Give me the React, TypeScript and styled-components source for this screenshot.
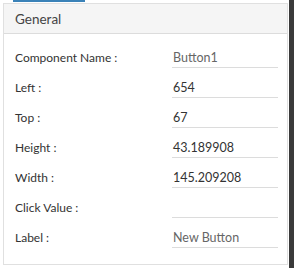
import styled, { createGlobalStyle } from "styled-components";

const GlobalStyle = createGlobalStyle`
  html, body {
    margin: 0;
    padding: 0;
    background: #ffffff;
  }
  body {
    font-family: Lato, "Noto Sans", sans-serif;
  }
`;

const Page = styled.div`
  display: flex;
  width: 294px;
  height: 268px;
  overflow: hidden;
`;

const Main = styled.div`
  position: relative;
  flex: 1;
  padding: 3px 0 0 3px;
`;

const TabIndicator = styled.div`
  position: absolute;
  top: 0;
  left: 13px;
  width: 72px;
  height: 2px;
  background: #3b82b8;
`;

const Scrollbar = styled.div`
  width: 5px;
  background: #3a3a3a;
`;

const Panel = styled.div`
  width: 283px;
  height: 260px;
  border: 1px solid #e0e0e0;
  display: flex;
  flex-direction: column;
`;

const Header = styled.div`
  height: 29px;
  background: #f5f5f5;
  border-bottom: 1px solid #dcdcdc;
  display: flex;
  align-items: center;
  padding-left: 11px;
  font-size: 13.5px;
  color: #444;
`;

const Body = styled.div`
  padding: 8px 0 0 11px;
  display: flex;
  flex-direction: column;
`;

const Row = styled.div`
  height: 30px;
  display: flex;
  align-items: center;
`;

const Label = styled.div`
  width: 157px;
  font-size: 12px;
  color: #333;
`;

const Value = styled.div<{ $muted?: boolean }>`
  width: 105px;
  height: 20px;
  box-sizing: content-box;
  border-bottom: 1px solid #dcdcdc;
  display: flex;
  align-items: center;
  padding-left: 1px;
  font-size: 12.5px;
  color: ${(p) => (p.$muted ? "#666" : "#333")};
  margin-top: 1px;
`;

const fields: { label: string; value: string; muted?: boolean }[] = [
  { label: "Component Name :", value: "Button1", muted: true },
  { label: "Left :", value: "654" },
  { label: "Top :", value: "67" },
  { label: "Height :", value: "43.189908" },
  { label: "Width :", value: "145.209208" },
  { label: "Click Value :", value: "" },
  { label: "Label :", value: "New Button", muted: true },
];

const App = () => {
  return (
    <>
      <GlobalStyle />
      <Page>
        <Main>
          <TabIndicator />
          <Panel>
            <Header>General</Header>
            <Body>
              {fields.map((f) => (
                <Row key={f.label}>
                  <Label>{f.label}</Label>
                  <Value $muted={f.muted}>{f.value}</Value>
                </Row>
              ))}
            </Body>
          </Panel>
        </Main>
        <Scrollbar />
      </Page>
    </>
  );
};

export default App;
